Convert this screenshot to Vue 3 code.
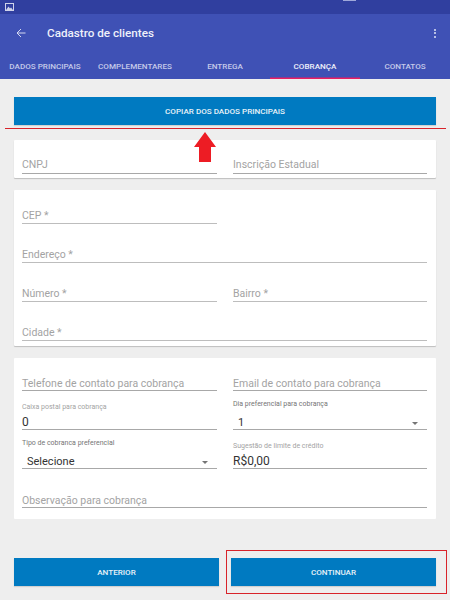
<script setup>
const tabs = ['DADOS PRINCIPAIS', 'COMPLEMENTARES', 'ENTREGA', 'COBRANÇA', 'CONTATOS'];
const activeTab = 'COBRANÇA';
</script>

<template>
  <div class="page">
    <div class="status-bar">
      <svg class="status-icon" width="9" height="8" viewBox="0 0 9 8">
        <rect x="0.5" y="0.5" width="8" height="7" fill="none" stroke="#cfd3ea" />
        <path d="M1 7 L3.5 3.5 L5 5.5 L6 4.5 L8 7 Z" fill="#cfd3ea" />
      </svg>
      <span class="status-mark"></span>
    </div>

    <header class="app-bar">
      <div class="toolbar">
        <svg class="back" width="10" height="10" viewBox="0 0 10 10">
          <path d="M9.5 5H1M5 1 1 5 5 9" fill="none" stroke="#d5d9f0" stroke-width="1" />
        </svg>
        <span class="title">Cadastro de clientes</span>
        <span class="more"><i></i><i></i><i></i></span>
      </div>
      <nav class="tabs">
        <div v-for="tab in tabs" :key="tab" class="tab" :class="{ active: tab === activeTab }">{{ tab }}</div>
      </nav>
    </header>

    <main class="content">
      <button class="btn btn-copy">COPIAR DOS DADOS PRINCIPAIS</button>

      <div class="red-line"></div>
      <svg class="red-arrow" width="24" height="31" viewBox="0 0 24 31">
        <path d="M12 0 23 15H18V30H6V15H1Z" fill="#ed1c24" />
      </svg>

      <section class="card card-docs">
        <div class="field"><span class="ph">CNPJ</span></div>
        <div class="field"><span class="ph">Inscrição Estadual</span></div>
      </section>

      <section class="card card-address">
        <div class="field"><span class="ph">CEP *</span></div>
        <div></div>
        <div class="field wide"><span class="ph">Endereço *</span></div>
        <div class="field"><span class="ph">Número *</span></div>
        <div class="field"><span class="ph">Bairro *</span></div>
        <div class="field wide"><span class="ph">Cidade *</span></div>
      </section>

      <section class="card card-billing">
        <div class="field"><span class="ph">Telefone de contato para cobrança</span></div>
        <div class="field"><span class="ph">Email de contato para cobrança</span></div>

        <div class="field small">
          <label class="lbl light">Caixa postal para cobrança</label>
          <span class="val">0</span>
        </div>
        <div class="field small">
          <label class="lbl up">Dia preferencial para cobrança</label>
          <span class="val sel">1<b class="caret"></b></span>
        </div>

        <div class="field small">
          <label class="lbl up">Tipo de cobranca preferencial</label>
          <span class="val sel">Selecione<b class="caret"></b></span>
        </div>
        <div class="field small">
          <label class="lbl light">Sugestão de limite de crédito</label>
          <span class="val">R$0,00</span>
        </div>

        <div class="field wide obs"><span class="ph">Observação para cobrança</span></div>
      </section>

      <div class="actions">
        <button class="btn">ANTERIOR</button>
        <div class="next-wrap">
          <button class="btn">CONTINUAR</button>
          <div class="red-box"></div>
        </div>
      </div>
    </main>
  </div>
</template>

<style>
html, body { margin: 0; background: #eeeeee; }
</style>

<style scoped>
.page { width: 450px; height: 600px; overflow: hidden; font-family: Roboto, "Liberation Sans", sans-serif; background: #eeeeee; }
.status-bar { position: relative; height: 14px; background: #303f9f; display: flex; align-items: center; padding-left: 5px; }
.status-icon { display: block; }
.status-mark { position: absolute; left: 343px; top: 0; width: 13px; height: 1px; background: #9fa8da; }

.app-bar { height: 65px; background: #3f51b5; display: flex; flex-direction: column; }
.toolbar { height: 36px; padding: 1px 14px 0 16px; display: flex; align-items: center; }
.back { margin-right: 21px; }
.title { color: #eef0fa; font-size: 11.7px; font-weight: 500; }
.more { margin-left: auto; display: flex; flex-direction: column; gap: 1.5px; }
.more i { width: 2px; height: 2px; background: #dfe3f5; border-radius: 50%; }

.tabs { flex: 1; display: flex; }
.tab { width: 90px; display: flex; align-items: center; justify-content: center; color: #c5cae9; font-size: 8.1px; font-weight: 500; white-space: nowrap; padding-top: 2px; box-sizing: border-box; }
.tab.active { color: #eef0fa; box-shadow: inset 0 -1.5px #e91e63; }

.content { position: relative; padding: 18px 14px 0; }
.btn { display: block; width: 100%; height: 28px; border: none; padding: 0; background: #007ac1; color: #e8f2f8; font-family: inherit; font-size: 8.1px; font-weight: 500; box-shadow: 0 1px 1px rgba(0, 0, 0, 0.12); }
.btn-copy { margin-bottom: 15px; }
.red-line { position: absolute; left: 5px; top: 49px; width: 441px; height: 1px; background: #d8232a; }
.red-arrow { position: absolute; left: 193px; top: 53px; z-index: 2; }

.card { background: #fff; display: grid; grid-template-columns: 195px 194px; column-gap: 16px; padding: 0 9px 0 8px; margin-bottom: 12px; border-radius: 1px; box-shadow: 0 1px 1px rgba(0, 0, 0, 0.2); align-content: start; }
.card-docs { height: 38px; }
.card-address { height: 156px; grid-auto-rows: 39px; }
.card-billing { height: 161px; box-shadow: none; }
.wide { grid-column: 1 / 3; }

.field { position: relative; border-bottom: 1px solid #a8a8a8; box-sizing: border-box; display: flex; flex-direction: column; justify-content: flex-end; }
.ph { color: #a3a3a3; font-size: 10.5px; padding-bottom: 2px; white-space: nowrap; }
.card-docs .field { height: 34px; }
.card-address .field { height: 34px; border-bottom-color: #bdbdbd; }
.card-address .ph { padding-bottom: 1px; }
.card-billing .ph { padding-bottom: 0; }
.card-billing > .field:nth-child(-n+2) { height: 33px; }
.small { height: 39px; }
.obs { height: 39px; }
.lbl { font-size: 7px; line-height: 8px; position: absolute; left: 0; white-space: nowrap; }
.lbl.light { color: #a3a3a3; top: 12px; }
.lbl.up { color: #757575; top: 9px; }
.val { color: #333; font-size: 12px; line-height: 14px; position: relative; }
.val.sel { padding-left: 5px; font-size: 11px; line-height: 12px; }
.caret { position: absolute; right: 9px; top: 5px; border: 3px solid transparent; border-top-color: #757575; border-bottom: none; }

.actions { display: flex; gap: 12px; margin-top: 39px; }
.actions > .btn { width: 205px; }
.next-wrap { position: relative; width: 205px; }
.red-box { position: absolute; left: -5px; right: -11px; top: -8px; bottom: -8px; border: 1px solid #d8232a; pointer-events: none; }
</style>
